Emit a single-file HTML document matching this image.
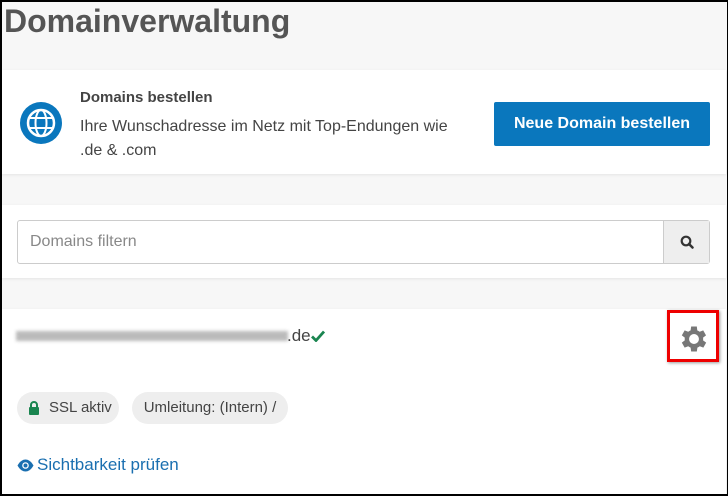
<!DOCTYPE html>
<html><head><meta charset="utf-8"><style>
*{box-sizing:border-box;margin:0;padding:0}
body{width:728px;height:496px;overflow:hidden;background:#f7f7f7;font-family:"Liberation Sans",sans-serif;position:relative}
.frame{position:absolute;left:0;top:0;width:728px;height:496px;border:2px solid #000;border-right:1px solid #000;z-index:5;pointer-events:none}
.abs{position:absolute}
h1{position:absolute;left:4px;top:3px;font-size:32px;font-weight:bold;color:#555}
.card{position:absolute;left:2px;right:2px;background:#fff;box-shadow:0 1px 3px rgba(0,0,0,.08)}
</style></head><body>
<div class="frame"></div>
<h1>Domainverwaltung</h1>
<div class="card" style="top:70px;height:104px">
  <svg class="abs" style="left:17px;top:31px" width="44" height="44" viewBox="0 0 44 44">
    <circle cx="22" cy="22" r="21" fill="#0a77bd"/>
    <circle cx="22" cy="22" r="13" fill="none" stroke="#fff" stroke-width="2.5"/>
    <ellipse cx="22" cy="22" rx="5.5" ry="13" fill="none" stroke="#fff" stroke-width="2"/>
    <line x1="9" y1="17" x2="35" y2="17" stroke="#fff" stroke-width="2"/>
    <line x1="9" y1="27" x2="35" y2="27" stroke="#fff" stroke-width="2"/>
  </svg>
  <div class="abs" style="left:78px;top:19px;font-size:15px;font-weight:bold;color:#444">Domains bestellen</div>
  <div class="abs" style="left:78px;top:45px;font-size:16px;color:#444;line-height:24px;width:420px">Ihre Wunschadresse im Netz mit Top-Endungen wie<br>.de &amp; .com</div>
  <div class="abs" style="left:492px;top:32px;width:216px;height:44px;background:#0a77bd;border-radius:2px;color:#fff;font-size:16px;font-weight:bold;text-align:center;line-height:44px">Neue Domain bestellen</div>
</div>
<div class="card" style="top:205px;height:73px">
  <div class="abs" style="left:15px;top:15px;width:693px;height:44px;border:1px solid #ccc;border-radius:3px;background:#fff">
    <div class="abs" style="left:12px;top:0;line-height:42px;font-size:16px;color:#888">Domains filtern</div>
    <div class="abs" style="right:0;top:0;width:46px;height:42px;background:#eee;border-left:1px solid #ccc">
      <svg class="abs" style="left:16px;top:14px" width="14" height="14" viewBox="0 0 14 14"><circle cx="6" cy="6" r="4.3" fill="none" stroke="#333" stroke-width="2.2"/><line x1="9" y1="9" x2="12.5" y2="12.5" stroke="#333" stroke-width="2.5" stroke-linecap="round"/></svg>
    </div>
  </div>
</div>
<div class="card" style="top:309px;height:185px">
  <div class="abs" style="left:14px;top:22px;width:272px;height:10px;background:#aaa;filter:blur(1.5px);opacity:.8"></div>
  <div class="abs" style="left:285px;top:17px;font-size:17px;color:#444">.de</div>
  <svg class="abs" style="left:309px;top:21px" width="14" height="12" viewBox="0 0 14 12"><path d="M1 6.5l4 4L13 1.5" fill="none" stroke="#1a8550" stroke-width="2.8"/></svg>
  <div class="abs" style="left:665px;top:1px;width:52px;height:52px;border:3px solid #e00;box-shadow:1px 1px 3px rgba(0,0,0,.4)"></div>
  <svg class="abs" style="left:675px;top:13px" width="34" height="34" viewBox="0 0 24 24"><path fill="#777" d="M19.4 13a7.5 7.5 0 000-2l2.1-1.6-2-3.5-2.5 1a7 7 0 00-1.7-1L15 3.2h-4l-.4 2.7a7 7 0 00-1.7 1l-2.5-1-2 3.5L6.5 11a7.5 7.5 0 000 2l-2.1 1.6 2 3.5 2.5-1a7 7 0 001.7 1l.4 2.7h4l.4-2.7a7 7 0 001.7-1l2.5 1 2-3.5zM13 15.5a3.5 3.5 0 110-7 3.5 3.5 0 010 7z" transform="translate(-1 0)"/></svg>
  <div class="abs" style="left:15px;top:83px;width:102px;height:32px;background:#eee;border-radius:16px">
    <svg class="abs" style="left:11px;top:9px" width="12" height="14" viewBox="0 0 12 14"><path d="M3 6V4a3 3 0 016 0v2" fill="none" stroke="#1a8550" stroke-width="2"/><rect x="1" y="6" width="10" height="8" rx="1" fill="#1a8550"/></svg>
    <div class="abs" style="left:32px;top:0;line-height:32px;font-size:15px;color:#444">SSL aktiv</div>
  </div>
  <div class="abs" style="left:130px;top:83px;width:156px;height:32px;background:#eee;border-radius:16px;text-align:center;line-height:32px;font-size:15px;color:#444">Umleitung: (Intern) /</div>
  <svg class="abs" style="left:15px;top:150px" width="17" height="13" viewBox="0 0 17 13"><path d="M.5 6.5C3 2 6 .5 8.5.5s5.5 1.5 8 6c-2.5 4.5-5.5 6-8 6s-5.5-1.5-8-6z" fill="#1a6fb0"/><circle cx="8.5" cy="6.5" r="3.3" fill="#fff"/><circle cx="8.5" cy="6.5" r="2" fill="#1a6fb0"/></svg>
  <div class="abs" style="left:35px;top:146px;font-size:17px;color:#1a6fb0">Sichtbarkeit prüfen</div>
</div>
</body></html>
